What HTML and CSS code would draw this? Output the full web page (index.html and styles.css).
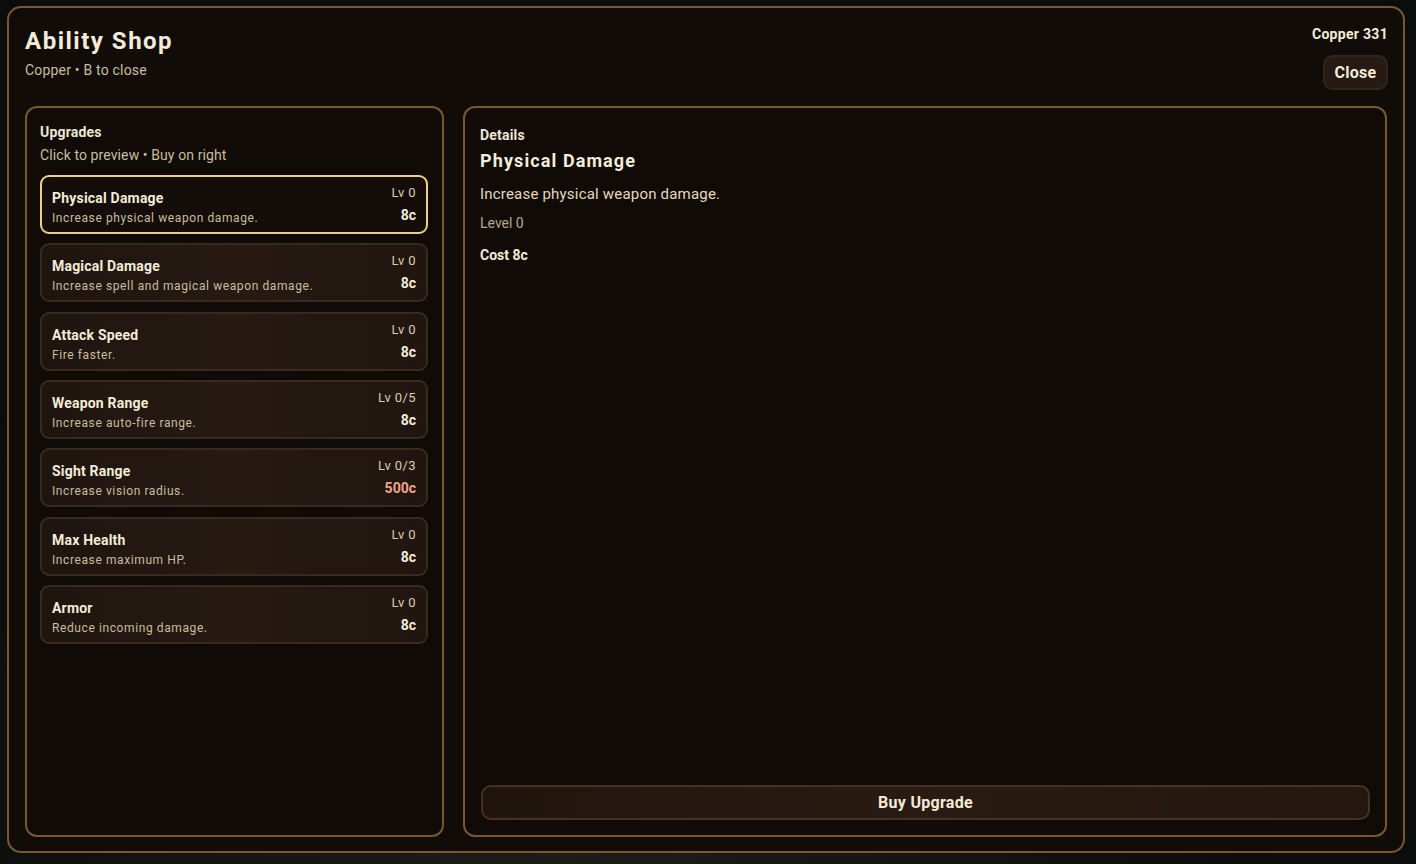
FILE: index.html
```html
<!DOCTYPE html>
<html>
<head>
<meta charset="utf-8">
<link rel="stylesheet" href="styles.css">
</head>
<body>
<div class="shop">
  <header class="head">
    <div class="head-left">
      <h1 class="title">Ability Shop</h1>
      <div class="sub">Copper • B to close</div>
    </div>
    <div class="head-right">
      <div class="copper">Copper 331</div>
      <button class="close">Close</button>
    </div>
  </header>
  <div class="body">
    <section class="panel list">
      <div class="panel-title">Upgrades</div>
      <div class="panel-sub">Click to preview • Buy on right</div>
      <div class="cards">
        <div class="card selected">
          <div class="card-main"><div class="card-name">Physical Damage</div><div class="card-desc">Increase physical weapon damage.</div></div>
          <div class="card-side"><div class="lv">Lv 0</div><div class="cost">8c</div></div>
        </div>
        <div class="card">
          <div class="card-main"><div class="card-name">Magical Damage</div><div class="card-desc">Increase spell and magical weapon damage.</div></div>
          <div class="card-side"><div class="lv">Lv 0</div><div class="cost">8c</div></div>
        </div>
        <div class="card">
          <div class="card-main"><div class="card-name">Attack Speed</div><div class="card-desc">Fire faster.</div></div>
          <div class="card-side"><div class="lv">Lv 0</div><div class="cost">8c</div></div>
        </div>
        <div class="card">
          <div class="card-main"><div class="card-name">Weapon Range</div><div class="card-desc">Increase auto-fire range.</div></div>
          <div class="card-side"><div class="lv">Lv 0/5</div><div class="cost">8c</div></div>
        </div>
        <div class="card">
          <div class="card-main"><div class="card-name">Sight Range</div><div class="card-desc">Increase vision radius.</div></div>
          <div class="card-side"><div class="lv">Lv 0/3</div><div class="cost expensive">500c</div></div>
        </div>
        <div class="card">
          <div class="card-main"><div class="card-name">Max Health</div><div class="card-desc">Increase maximum HP.</div></div>
          <div class="card-side"><div class="lv">Lv 0</div><div class="cost">8c</div></div>
        </div>
        <div class="card">
          <div class="card-main"><div class="card-name">Armor</div><div class="card-desc">Reduce incoming damage.</div></div>
          <div class="card-side"><div class="lv">Lv 0</div><div class="cost">8c</div></div>
        </div>
      </div>
    </section>
    <section class="panel details">
      <div class="d-label">Details</div>
      <div class="d-name">Physical Damage</div>
      <div class="d-desc">Increase physical weapon damage.</div>
      <div class="d-level">Level 0</div>
      <div class="d-cost">Cost 8c</div>
      <div class="spacer"></div>
      <button class="buy">Buy Upgrade</button>
    </section>
  </div>
</div>
</body>
</html>
```

FILE: styles.css
```css
* { box-sizing: border-box; }
html, body { margin: 0; padding: 0; }
body {
  width: 1416px;
  height: 864px;
  background: radial-gradient(ellipse at 40% 100%, #1a1d18 0%, #0b0d0c 60%), #0b0d0c;
  font-family: "Roboto", "Liberation Sans", sans-serif;
  color: #efe6d2;
  padding: 6px 11px 11px 7px;
  overflow: hidden;
}
.shop {
  width: 1398px;
  height: 847px;
  border: 2px solid #7a5631;
  border-radius: 14px;
  background: #120c08;
  padding: 16px 16px 14px 16px;
  display: flex;
  flex-direction: column;
}
.head {
  display: flex;
  justify-content: space-between;
  align-items: flex-start;
  height: 82px;
  flex: none;
}
.title {
  margin: 0;
  font-size: 24px;
  font-weight: 700;
  letter-spacing: 1.5px;
  line-height: 34px;
  color: #f3ecd8;
}
.sub {
  margin-top: 4px;
  font-size: 14px;
  color: #c9bd9e;
  letter-spacing: 0.2px;
}
.head-right {
  display: flex;
  flex-direction: column;
  align-items: flex-end;
  padding-top: 1px;
  margin-right: -1px;
}
.copper {
  font-size: 14px;
  font-weight: 700;
  letter-spacing: 0.3px;
  line-height: 18px;
  color: #f3ecd8;
}
.close {
  margin-top: 12px;
  width: 65px;
  height: 35px;
  background: #261a13;
  border: 2px solid #33251b;
  border-radius: 10px;
  color: #f3ecd8;
  font-family: inherit;
  font-size: 16px;
  font-weight: 700;
  letter-spacing: 0.3px;
  padding: 0;
}
.body {
  flex: 1;
  display: flex;
  gap: 19px;
  min-height: 0;
}
.panel {
  border: 2px solid #7a5631;
  border-radius: 12px;
  background: #110b07;
}
.list {
  width: 419px;
  padding: 16px 14px 16px 13px;
  display: flex;
  flex-direction: column;
}
.panel-title {
  font-size: 14px;
  font-weight: 700;
  letter-spacing: 0.2px;
  line-height: 18px;
  margin-top: -1px;
}
.panel-sub {
  font-size: 14px;
  color: #c9bd9e;
  line-height: 18px;
  margin-top: 5px;
  letter-spacing: 0.1px;
}
.cards {
  margin-top: 11px;
  display: flex;
  flex-direction: column;
  gap: 9.33px;
}
.card {
  height: 59px;
  flex: none;
  border: 2px solid #3a291d;
  border-radius: 9px;
  background: linear-gradient(90deg, #1f150f 0%, #261a13 50%, #20160f 100%);
  display: flex;
  justify-content: space-between;
  padding: 10px 10px 0 10px;
}
.card.selected {
  border-color: #ecd08a;
  background: #140d09;
}
.card-name {
  font-size: 14px;
  font-weight: 700;
  line-height: 18px;
  margin-top: 2px;
  letter-spacing: 0.2px;
  color: #f3ecd8;
}
.card-desc {
  font-size: 12px;
  color: #c9bd9e;
  line-height: 16px;
  margin-top: 3px;
  letter-spacing: 0.6px;
}
.card-side {
  text-align: right;
  display: flex;
  flex-direction: column;
  align-items: flex-end;
}
.lv {
  font-size: 13px;
  line-height: 16px;
  color: #d8cdb0;
  letter-spacing: 0.4px;
  margin-top: -2px;
}
.cost {
  font-size: 14px;
  font-weight: 700;
  line-height: 18px;
  margin-top: 5px;
  color: #f3ecd8;
}
.cost.expensive { color: #f0a48e; }
.details {
  flex: 1;
  padding: 18px 15px 15px 15px;
  display: flex;
  flex-direction: column;
}
.d-label {
  font-size: 14px;
  font-weight: 700;
  line-height: 18px;
  letter-spacing: 0.2px;
}
.d-name {
  font-size: 18px;
  font-weight: 700;
  line-height: 24px;
  letter-spacing: 1.1px;
  margin-top: 5px;
  color: #f3ecd8;
}
.d-desc {
  font-size: 15px;
  line-height: 20px;
  margin-top: 11px;
  color: #e4d9bd;
  letter-spacing: 0.2px;
}
.d-level {
  font-size: 14px;
  line-height: 18px;
  margin-top: 10px;
  color: #b3a88c;
}
.d-cost {
  font-size: 14px;
  font-weight: 700;
  line-height: 18px;
  margin-top: 14px;
  color: #f3ecd8;
}
.spacer { flex: 1; }
.buy {
  height: 35px;
  flex: none;
  margin: 0 0 0 1px;
  background: linear-gradient(90deg, #20150e 0%, #2a1b12 50%, #23170f 100%);
  border: 2px solid #47321f;
  border-radius: 10px;
  color: #f3ecd8;
  font-family: inherit;
  font-size: 16px;
  font-weight: 700;
  letter-spacing: 0.3px;
  padding: 0;
}
```
